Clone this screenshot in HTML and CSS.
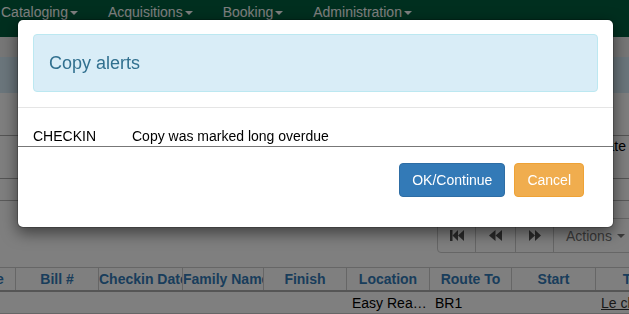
FILE: index.html
```html
<!DOCTYPE html>
<html>
<head>
<meta charset="utf-8">
<title>Copy alerts</title>
<link rel="stylesheet" href="styles.css">
</head>
<body>
<div class="page">
  <nav class="navbar">
    <ul class="nav">
      <li>Cataloging<span class="caret"></span></li>
      <li>Acquisitions<span class="caret"></span></li>
      <li>Booking<span class="caret"></span></li>
      <li>Administration<span class="caret"></span></li>
    </ul>
  </nav>
  <div class="subbar"></div>
  <div class="infobar"></div>
  <div class="section s1"></div>
  <div class="section s2"><span class="side-text">Due Date</span></div>
  <div class="section s3"></div>
  <div class="toolbar">
    <div class="btn-group">
      <span class="pbtn w39"><svg width="14" height="11" viewBox="0 0 14 11"><rect x="0" y="0" width="2.5" height="11"/><polygon points="2.5,5.5 8,0 8,11"/><polygon points="8,5.5 14,0 14,11"/></svg></span>
      <span class="pbtn w41"><svg width="13" height="11" viewBox="0 0 13 11"><polygon points="0,5.5 6.5,0 6.5,11"/><polygon points="6.5,5.5 13,0 13,11"/></svg></span>
      <span class="pbtn w39"><svg width="12" height="11" viewBox="0 0 12 11"><polygon points="0,0 6,5.5 0,11"/><polygon points="6,0 12,5.5 6,11"/></svg></span>
      <span class="pbtn w84">Actions<span class="caret"></span></span>
    </div>
  </div>
  <div class="grid">
    <div class="grid-row head">
      <div class="cell">Due Date</div>
      <div class="cell">Bill #</div>
      <div class="cell">Checkin Date</div>
      <div class="cell">Family Name</div>
      <div class="cell">Finish</div>
      <div class="cell">Location</div>
      <div class="cell">Route To</div>
      <div class="cell">Start</div>
      <div class="cell">Title</div>
    </div>
    <div class="grid-row body-row">
      <div class="cell first">Long overdue item</div>
      <div class="cell"></div>
      <div class="cell"></div>
      <div class="cell"></div>
      <div class="cell"></div>
      <div class="cell">Easy Readers</div>
      <div class="cell">BR1</div>
      <div class="cell"></div>
      <div class="cell"><span class="link">Le chat</span></div>
    </div>
  </div>
</div>

<div class="backdrop"></div>

<div class="modal">
  <div class="modal-header">
    <div class="alert">Copy alerts</div>
  </div>
  <div class="modal-body">
    <div class="alert-row">
      <span class="evt">CHECKIN</span><span>Copy was marked long overdue</span>
    </div>
  </div>
  <div class="modal-footer">
    <button class="btn btn-primary">OK/Continue</button>
    <button class="btn btn-warning">Cancel</button>
  </div>
</div>
</body>
</html>
```
FILE: styles.css
```css
html, body {
  margin: 0;
  padding: 0;
  overflow: hidden;
  width: 629px;
  height: 314px;
}
body {
  font-family: "Liberation Sans", Arial, sans-serif;
  font-size: 14px;
  line-height: 20px;
  color: #000;
  background: #fff;
}
.page {
  width: 629px;
  height: 314px;
  overflow: hidden;
}

/* navbar */
.navbar {
  height: 37px;
  background: #005f3f;
}
.nav {
  list-style: none;
  margin: 0 0 0 -14px;
  padding: 0;
  display: flex;
}
.nav li {
  padding: 2px 15px 0;
  color: #fff;
  white-space: nowrap;
}
.caret {
  display: inline-block;
  width: 0;
  height: 0;
  margin-left: 2px;
  vertical-align: middle;
  border-top: 4px solid;
  border-left: 4px solid transparent;
  border-right: 4px solid transparent;
}

.subbar {
  height: 20px;
  background: #eee;
}
.infobar {
  height: 36px;
  background: #d7ecf8;
}
.section {
  border-bottom: 1px solid #aaa;
}
.s1 { height: 42px; }
.s2 {
  height: 42px;
  display: flex;
  justify-content: flex-end;
  padding-right: 3px;
}
.side-text {
  padding-top: 0;
}
.s3 { height: 21px; border-bottom-color: #b5b5b5; }

/* toolbar */
.toolbar {
  display: flex;
  justify-content: flex-end;
  margin: 17px -8px 0 0;
}
.btn-group {
  display: flex;
}
.pbtn {
  box-sizing: border-box;
  height: 35px;
  border: 1px solid #ccc;
  background: #fff;
  color: #777;
  display: flex;
  align-items: center;
  justify-content: center;
  white-space: nowrap;
}
.pbtn + .pbtn { margin-left: -1px; }
.pbtn:first-child { border-radius: 4px 0 0 4px; }
.pbtn svg { fill: #555; }
.pbtn .caret { margin-left: 5px; color: #777; }
.w39 { width: 39px; }
.w41 { width: 41px; }
.w84 { width: 84px; justify-content: flex-start; padding-left: 12px; }

/* grid */
.grid {
  margin: 14px 0 0 -68px;
}
.grid-row {
  display: grid;
  grid-template-columns: 83px 83px 84px 81px 83px 83px 82px 84px 83px;
}
.cell {
  box-sizing: border-box;
  border-left: 1px solid #ccc;
  white-space: nowrap;
  overflow: hidden;
}
.cell:first-child { border-left: none; }
.head {
  border-top: 1px solid #ccc;
  border-bottom: 2px solid #aaa;
}
.head .cell {
  height: 22px;
  line-height: 23px;
  text-align: center;
  font-weight: bold;
  color: #337ab7;
}
.body-row {
  border-bottom: 1px solid #ccc;
}
.body-row .cell {
  height: 21px;
  line-height: 22px;
  padding-left: 5px;
  text-overflow: ellipsis;
  border-left-color: transparent;
}
.body-row .cell.first {
  padding-right: 8px;
}
.link {
  text-decoration: underline;
  color: #333;
}

/* overlay + modal */
.backdrop {
  position: fixed;
  inset: 0;
  background: rgba(0, 0, 0, 0.5);
}
.modal {
  position: absolute;
  left: 17px;
  top: 19px;
  width: 597px;
  box-sizing: border-box;
  background: #fff;
  border: 1px solid rgba(0, 0, 0, 0.2);
  border-radius: 6px;
  box-shadow: 0 5px 15px rgba(0, 0, 0, 0.5);
  background-clip: padding-box;
}
.modal-header {
  padding: 14px 15px 15px;
  border-bottom: 1px solid #e5e5e5;
}
.alert {
  padding: 15px 15px;
  border: 1px solid #bce8f1;
  border-radius: 4px;
  background: #d9edf7;
  color: #31708f;
  font-size: 18px;
  line-height: 26px;
}
.modal-body {
  padding: 18px 0 0;
}
.alert-row {
  padding: 0 15px;
  line-height: 20px;
  border-bottom: 1px solid #777;
  display: flex;
}
.evt {
  width: 99px;
}
.modal-footer {
  padding: 16px 29px 30px 15px;
  display: flex;
  justify-content: flex-end;
  gap: 9px;
}
.btn {
  font-family: "Liberation Sans", Arial, sans-serif;
  font-size: 14px;
  line-height: 20px;
  padding: 6px 12px;
  border: 1px solid transparent;
  border-radius: 4px;
  color: #fff;
  margin: 0;
}
.btn-primary {
  background: #337ab7;
  border-color: #2e6da4;
}
.btn-warning {
  background: #f0ad4e;
  border-color: #eea236;
}
```
